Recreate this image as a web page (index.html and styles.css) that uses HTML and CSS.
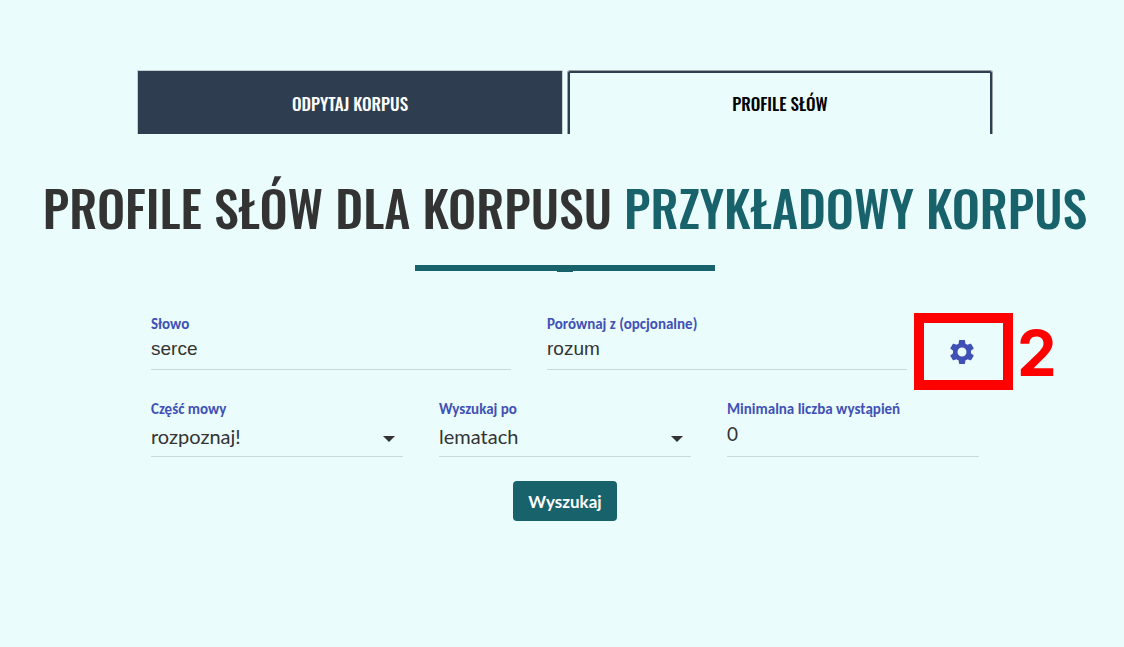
FILE: index.html
```
<!DOCTYPE html>
<html lang="pl">
<head>
  <meta charset="UTF-8">
  <meta name="viewport" content="width=device-width, initial-scale=1">
  <title>Profile słów</title>
  <link rel="stylesheet" href="styles.css">
</head>
<body>
  <main class="page">
    <!-- Tabs -->
    <nav class="tabs">
      <a href="#korpus" class="tab">ODPYTAJ KORPUS</a>
      <a href="#profile" class="tab tab-active">PROFILE SŁÓW</a>
    </nav>

    <h1 class="title">PROFILE SŁÓW DLA KORPUSU <span class="corpus-name">PRZYKŁADOWY KORPUS</span></h1>
    <div class="divider"></div>

    <!-- Search form -->
    <form class="search-form">
      <div class="row">
        <div class="field">
          <label for="word">Słowo</label>
          <input type="text" id="word" value="serce">
        </div>
        <div class="field">
          <label for="compare">Porównaj z (opcjonalne)</label>
          <input type="text" id="compare" value="rozum">
        </div>
        <div class="settings">
          <button type="button" class="settings-btn" aria-label="Ustawienia">
            <svg width="30" height="30" viewBox="0 0 24 24" fill="currentColor">
              <path d="M19.14 12.94c.04-.3.06-.61.06-.94s-.02-.64-.07-.94l2.03-1.58a.49.49 0 0 0 .12-.61l-1.92-3.32a.49.49 0 0 0-.59-.22l-2.39.96a7 7 0 0 0-1.62-.94l-.36-2.54a.48.48 0 0 0-.48-.41h-3.84a.47.47 0 0 0-.47.41l-.36 2.54c-.59.24-1.13.57-1.62.94l-2.39-.96a.48.48 0 0 0-.59.22L2.74 8.87a.47.47 0 0 0 .12.61l2.03 1.58a6 6 0 0 0-.02 1.88l-2.03 1.58a.49.49 0 0 0-.12.61l1.92 3.32c.12.22.37.29.59.22l2.39-.96c.5.38 1.03.7 1.62.94l.36 2.54c.05.24.24.41.48.41h3.84c.24 0 .44-.17.47-.41l.36-2.54a7 7 0 0 0 1.62-.94l2.39.96c.22.08.47 0 .59-.22l1.92-3.32a.47.47 0 0 0-.12-.61zM12 15.6a3.6 3.6 0 1 1 0-7.2 3.6 3.6 0 0 1 0 7.2z"/>
            </svg>
          </button>
          <div class="marker"></div>
          <span class="marker-number">2</span>
        </div>
      </div>

      <div class="row">
        <div class="field">
          <label for="pos">Część mowy</label>
          <select id="pos">
            <option>rozpoznaj!</option>
          </select>
        </div>
        <div class="field">
          <label for="by">Wyszukaj po</label>
          <select id="by">
            <option>lematach</option>
          </select>
        </div>
        <div class="field field-number">
          <label for="min">Minimalna liczba wystąpień</label>
          <input type="text" inputmode="numeric" id="min" value="0">
        </div>
      </div>

      <button type="submit" class="submit-btn">Wyszukaj</button>
    </form>
  </main>
</body>
</html>
```

FILE: styles.css
```
* {
  box-sizing: border-box;
}

body {
  margin: 0;
  background: #ebfcfc;
  color: #333;
  font-family: Lato, sans-serif;
}

.page {
  padding: 70px 0 40px 6px;
}

/* Tabs */
.tabs {
  display: flex;
  gap: 4px;
  max-width: 856px;
  margin: 0 auto;
}

.tab {
  flex: 1 1 0;
  height: 64px;
  border: 1px solid #c4d0d1;
  border-bottom: 0;
  background: #2e3e50;
  background-clip: padding-box;
  color: #fff;
  font-family: Oswald, "Liberation Sans Narrow", sans-serif;
  font-size: 17px;
  font-weight: 500;
  line-height: 66px;
  text-align: center;
  text-decoration: none;
}

.tab-active {
  border-color: #9aa3a8;
  border-radius: 3px 3px 0 0;
  background: transparent;
  box-shadow: inset 0 2px #2e3e50, inset 2px 0 #2e3e50, inset -2px 0 #2e3e50;
  color: #000;
}

/* Heading */
.title {
  margin: 36px 0 0;
  font-family: Oswald, "Liberation Sans Narrow", sans-serif;
  font-size: 50px;
  font-weight: 500;
  line-height: 72px;
  text-align: center;
}

.corpus-name {
  color: #18626c;
}

.divider {
  position: relative;
  width: 300px;
  height: 6px;
  margin: 23px auto 0;
  background: #18626c;
}

.divider::after {
  content: "";
  position: absolute;
  left: 142px;
  top: 6px;
  width: 16px;
  height: 1px;
  background: #18626c;
}

/* Form */
.search-form {
  display: flex;
  flex-direction: column;
  max-width: 828px;
  margin: 44px auto 0;
}

.row {
  display: flex;
  gap: 36px;
  margin-bottom: 30px;
}

.row:nth-child(2) {
  margin-bottom: 24px;
}

.field {
  display: flex;
  flex: 1;
  flex-direction: column;
  border-bottom: 1px solid #c9dadb;
}

label {
  color: #3f51b5;
  font-family: Carlito, Lato, sans-serif;
  font-size: 15px;
  font-weight: bold;
  line-height: 18px;
}

input,
select {
  width: 100%;
  padding: 0;
  border: 0;
  outline: 0;
  background: transparent;
  color: #333;
  font-size: 19px;
}

input {
  height: 32px;
  margin-bottom: 4px;
  font-family: "Liberation Sans", Arial, sans-serif;
}

select {
  height: 36px;
  margin-bottom: 2px;
  appearance: none;
  background: url("data:image/svg+xml,%3Csvg xmlns='http://www.w3.org/2000/svg' width='12' height='6'%3E%3Cpath d='M0 0h12L6 6z' fill='%23333'/%3E%3C/svg%3E") no-repeat right 8px top 18px;
  font-family: Lato, sans-serif;
  font-size: 20px;
}

.field-number input {
  height: 30px;
  font-family: Lato, sans-serif;
}

/* Settings button with its marker */
.settings {
  position: relative;
  margin-left: -36px;
  flex: 0 0 72px;
  display: flex;
  justify-content: flex-end;
  align-items: flex-end;
}

.settings-btn {
  width: 34px;
  height: 36px;
  padding: 2px;
  border: 0;
  background: transparent;
  color: #3f51b5;
  cursor: pointer;
}

.settings-btn svg {
  display: block;
}

.marker {
  position: absolute;
  top: -2px;
  right: -34px;
  width: 99px;
  height: 77px;
  border: 10px solid #f00;
  pointer-events: none;
}

.marker-number {
  position: absolute;
  left: 110px;
  top: 0;
  color: #f00;
  font-family: Inter, sans-serif;
  font-size: 63px;
  font-weight: bold;
  line-height: 76px;
}

.submit-btn {
  align-self: center;
  width: 104px;
  height: 40px;
  padding: 0;
  border: 0;
  border-radius: 4px;
  background: #18626c;
  color: #fff;
  font-family: Lato, sans-serif;
  font-size: 17px;
  font-weight: bold;
  cursor: pointer;
}
```
